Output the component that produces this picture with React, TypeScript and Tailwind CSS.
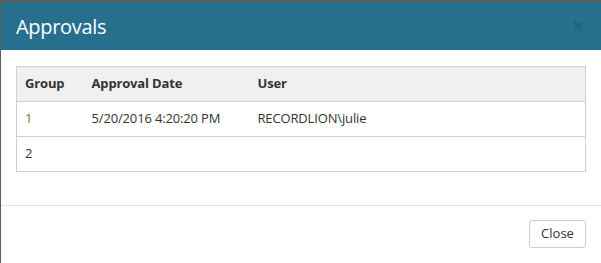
import React from "react";

export default function App() {
  const font = { fontFamily: '"Segoe UI", "Open Sans", "Noto Sans", sans-serif' };
  const cell = "border-y border-[#cfcfcf] text-left pl-[8px]";
  return (
    <div className="w-[601px] h-[263px] bg-[#5f5f5f] pl-[1px] pt-[2px] overflow-hidden" style={font}>
      <div className="w-[600px] h-[261px] bg-white flex flex-col">
        <div className="h-[48px] bg-[#26708e] flex items-center justify-between pl-[15px] pr-[16px]">
          <span className="text-white text-[20px] leading-none pt-[2px] tracking-[-0.3px]">Approvals</span>
          <span className="text-[#1d5a73] text-[20px] leading-none opacity-80 mr-[1px]">×</span>
        </div>
        <div className="px-[15px] pt-[16px] pb-[33px] border-b border-[#e5e5e5]">
          <table className="w-full table-fixed border-collapse text-[13px] text-[#333] tracking-[-0.15px]">
            <colgroup>
              <col className="w-[67px]" />
              <col className="w-[166px]" />
              <col />
            </colgroup>
            <thead>
              <tr className="bg-[#f0f0f0] h-[35px]">
                <th className={`${cell} border-l font-bold`}>Group</th>
                <th className={`${cell} font-bold`}>Approval Date</th>
                <th className={`${cell} border-r font-bold`}>User</th>
              </tr>
            </thead>
            <tbody>
              <tr className="h-[35px]">
                <td className={`${cell} border-l text-[#8a6d3b]`}>1</td>
                <td className={cell}>5/20/2016 4:20:20 PM</td>
                <td className={`${cell} border-r`}>RECORDLION\julie</td>
              </tr>
              <tr className="h-[35px]">
                <td className={`${cell} border-l`}>2</td>
                <td className={cell}></td>
                <td className={`${cell} border-r`}></td>
              </tr>
            </tbody>
          </table>
        </div>
        <div className="flex justify-end pr-[15px] pt-[14px]">
          <button className="h-[28px] w-[57px] border border-[#ccc] rounded-[3px] bg-white text-[13px] text-[#333]">Close</button>
        </div>
      </div>
    </div>
  );
}
